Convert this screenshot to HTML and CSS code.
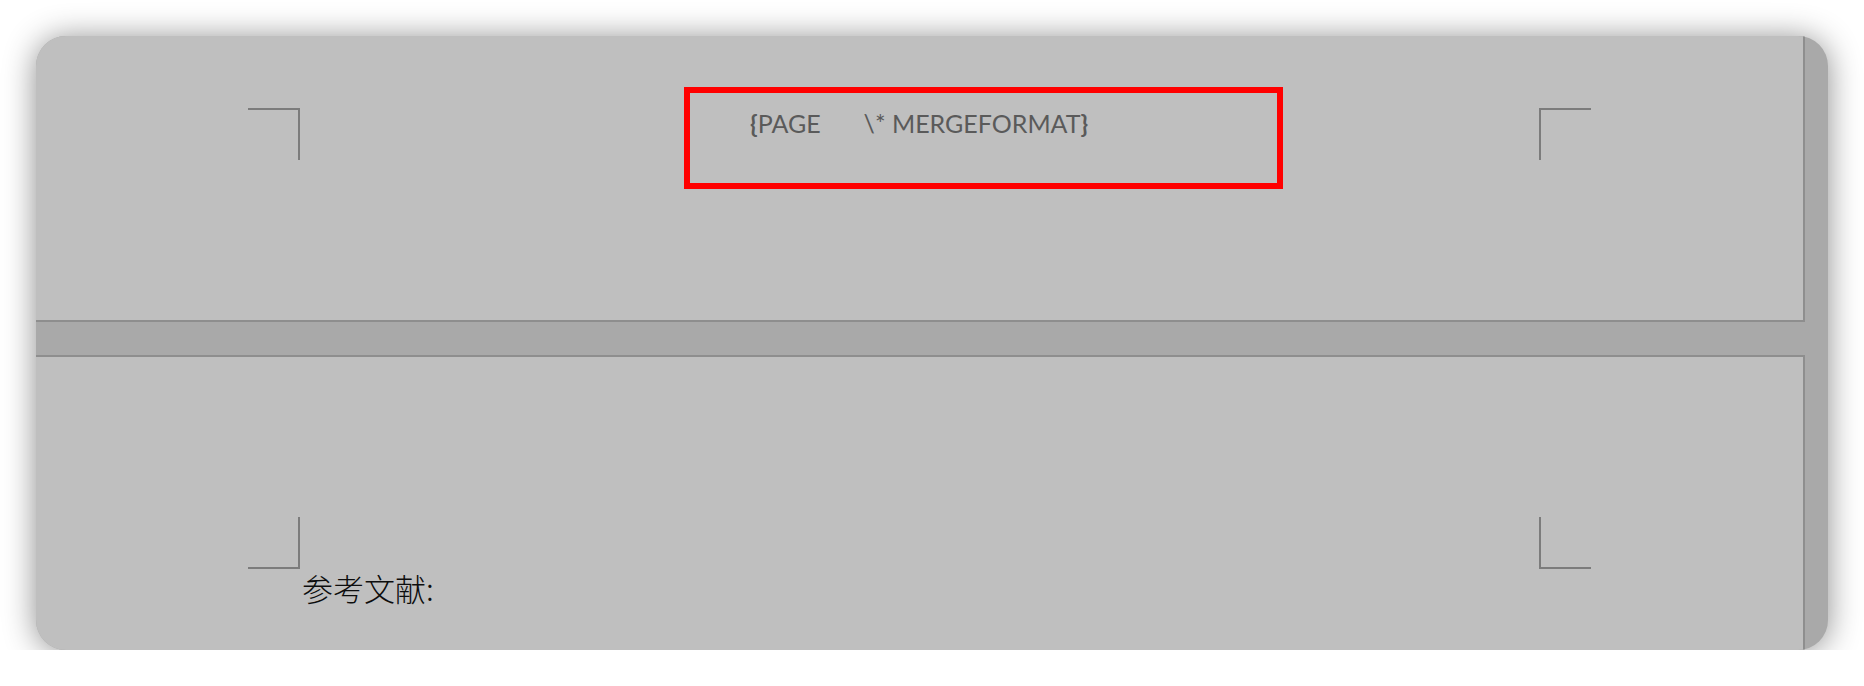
FILE: index.html
```html
<!DOCTYPE html>
<html lang="zh">
<head>
<meta charset="utf-8">
<title>Page field</title>
<link rel="stylesheet" href="styles.css">
</head>
<body>
<div class="card">
  <section class="page page-end">
    <div class="mark mark-tl"></div>
    <div class="field"><span class="brace">{</span><span class="code">PAGE</span><span class="code switch">\* MERGEFORMAT</span><span class="brace">}</span></div>
    <div class="mark mark-tr"></div>
  </section>
  <section class="page page-start">
    <div class="marks">
      <div class="mark mark-bl"></div>
      <div class="mark mark-br"></div>
    </div>
    <p class="heading">参考文献:</p>
  </section>
</div>
</body>
</html>
```
FILE: styles.css
```css
* { box-sizing: border-box; }
body { margin: 0; background: #ffffff; }

.card {
  margin: 36px 0 0 36px;
  width: 1792px;
  height: 614px;
  border-radius: 30px;
  background: #a9a9a9;
  overflow: hidden;
  display: flex;
  flex-direction: column;
  gap: 33px;
  box-shadow: 0 2px 32px rgba(0, 0, 0, 0.45);
}

.page {
  width: 1769px;
  background: #bfbfbf;
  border-right: 2px solid #8e8e8e;
}

.page-end {
  height: 286px;
  flex: none;
  border-bottom: 2px solid #8e8e8e;
  display: flex;
  align-items: flex-start;
  padding: 51px 0 0 212px;
}

.mark {
  width: 52px;
  height: 52px;
  flex: none;
  border: 0 solid #7c7c7c;
}
.mark-tl { margin-top: 21px; border-top-width: 2px; border-right-width: 2px; }
.mark-tr { margin-top: 21px; margin-left: 256px; border-top-width: 2px; border-left-width: 2px; }

.field {
  margin-left: 384px;
  width: 599px;
  height: 102px;
  flex: none;
  border: 6px solid #ff0000;
  padding: 15px 0 0 60px;
  font-family: Lato, "Liberation Sans", sans-serif;
  font-size: 25px;
  line-height: 30px;
  color: #5a5a5a;
  white-space: nowrap;
}
.brace { font-weight: 700; }
.switch { margin-left: 43px; }

.page-start {
  flex: 1;
  border-top: 2px solid #8e8e8e;
  padding: 160px 0 0 212px;
}
.marks { display: flex; gap: 1239px; }
.mark-bl { border-bottom-width: 2px; border-right-width: 2px; }
.mark-br { border-bottom-width: 2px; border-left-width: 2px; }

.heading {
  margin: 3px 0 0 54px;
  font-family: "Noto Sans CJK SC", sans-serif;
  font-size: 31px;
  font-weight: 300;
  line-height: 31px;
  color: #0d0d0d;
}
```
